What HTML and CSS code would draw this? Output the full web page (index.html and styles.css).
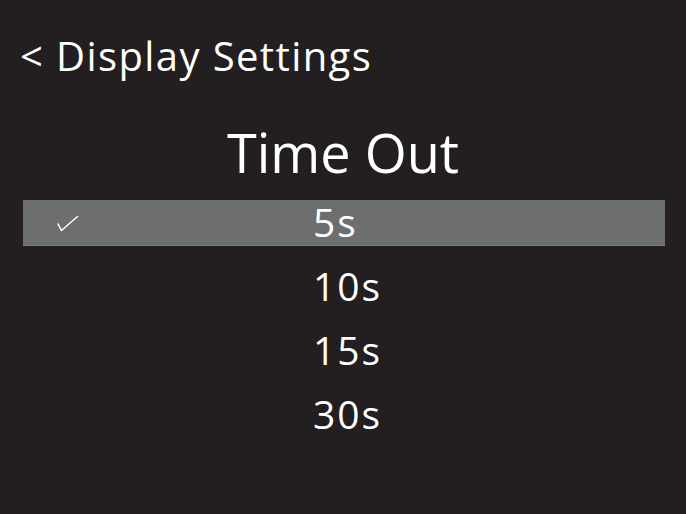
FILE: index.html
```html
<!DOCTYPE html>
<html>
<head>
<meta charset="utf-8">
<link rel="stylesheet" href="styles.css">
</head>
<body>
<div class="screen">
  <div class="header">&lt; Display Settings</div>
  <div class="title">Time Out</div>
  <div class="list">
    <div class="row selected">
      <span class="check"><svg width="22" height="17" viewBox="0 0 22 17"><path d="M1 9 L4.5 15.5 L20.5 1.5" fill="none" stroke="#fff" stroke-width="1.5" stroke-linecap="round" stroke-linejoin="round"/></svg></span>
      <span class="label">5s</span>
    </div>
    <div class="row"><span class="label">10s</span></div>
    <div class="row"><span class="label">15s</span></div>
    <div class="row"><span class="label">30s</span></div>
  </div>
</div>
</body>
</html>
```
FILE: styles.css
```css
html, body {
  margin: 0;
  padding: 0;
  background: #231f20;
}
.screen {
  width: 686px;
  height: 514px;
  background: #231f20;
  color: #ffffff;
  font-family: "Open Sans", "Noto Sans", sans-serif;
  box-sizing: border-box;
  padding-top: 28px;
}
.header {
  font-size: 40px;
  line-height: 56px;
  letter-spacing: 1.4px;
  padding-left: 20px;
}
.title {
  font-size: 54px;
  line-height: 64px;
  text-align: center;
  margin-top: 36px;
}
.list {
  margin: 16px 21px 0 23px;
  display: flex;
  flex-direction: column;
  gap: 18px;
}
.row {
  height: 46px;
  display: flex;
  align-items: center;
  position: relative;
}
.row.selected {
  background: #6d6e70;
  box-shadow: inset 0 -1px 0 #7a7b7d;
}
.check {
  position: absolute;
  left: 34px;
  top: 15px;
  display: block;
  height: 17px;
}
.label {
  font-size: 39px;
  line-height: 46px;
  letter-spacing: 2px;
  margin-left: 290px;
  padding-bottom: 2px;
}
```
